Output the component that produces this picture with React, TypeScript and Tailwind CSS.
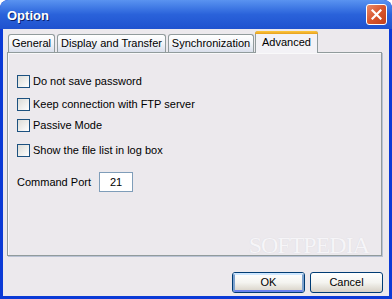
import React from "react";

const font = { fontFamily: '"Liberation Sans", Arial, sans-serif' };

function Check({ label }: { label: string }) {
  return (
    <div className="flex items-center h-[13px]">
      <div className="w-[13px] h-[13px] border border-[#1c5180] bg-gradient-to-br from-[#dcdcd7] to-[#ffffff]" />
      <span className="ml-[3px] text-[11px] leading-none text-black">{label}</span>
    </div>
  );
}

function Tab({ label, w, selected }: { label: string; w: string; selected?: boolean }) {
  if (selected) {
    return (
      <div className={`${w} h-[22px] relative z-10 -mb-px -ml-[1px] border border-b-0 border-[#919b9c] rounded-t-[3px] bg-[#f3f2f6] flex flex-col`}>
        <div className="h-[3px] -mx-px -mt-px rounded-t-[3px] bg-gradient-to-b from-[#ffc83c] to-[#e6a01e]" />
        <div className="flex-1 flex items-center justify-center text-[11px] leading-none text-black pb-[3px]">{label}</div>
      </div>
    );
  }
  return (
    <div className={`${w} h-[18px] border border-b-0 border-[#919b9c] rounded-t-[3px] bg-gradient-to-b from-[#ffffff] via-[#f2f4f8] to-[#d9dfeb] flex items-center justify-center text-[11px] leading-none text-black`}>
      {label}
    </div>
  );
}

function Btn({ label, def }: { label: string; def?: boolean }) {
  return (
    <div className="w-[73px] h-[21px] rounded-[3px] border border-[#003c74] bg-gradient-to-b from-[#ffffff] via-[#f4f4f0] to-[#d6d0c5] flex items-center justify-center relative">
      {def && <div className="absolute inset-0 rounded-[2px] border-[2px] border-[#7da2ce] border-t-[#cee7ff] border-b-[#6982ee]" />}
      <span className="relative text-[11px] leading-none text-black">{label}</span>
    </div>
  );
}

export default function App() {
  return (
    <div style={font} className="w-[392px] h-[299px] bg-[#0b3ad6] rounded-t-[8px] flex flex-col overflow-hidden select-none">
      {/* Title bar */}
      <div className="h-[29px] shrink-0 rounded-t-[8px] bg-gradient-to-b from-[#5a93f0] via-[#2a62da] to-[#1f52cf] flex items-center justify-between pl-[7px] pr-[5px]">
        <span className="text-white font-bold text-[13px] leading-none pt-[2px] [text-shadow:1px_1px_0_#0a1f6a]">
          Option
        </span>
        <div className="w-[21px] h-[21px] rounded-[3px] border border-white bg-gradient-to-br from-[#e98a6a] via-[#d8552c] to-[#c2401a] flex items-center justify-center">
          <svg width="11" height="11" viewBox="0 0 11 11">
            <path d="M1.5 1.5 L9.5 9.5 M9.5 1.5 L1.5 9.5" stroke="white" strokeWidth="2.2" strokeLinecap="square" />
          </svg>
        </div>
      </div>

      {/* Body */}
      <div className="flex-1 mx-[3px] mb-[3px] bg-[#ece9ed] flex flex-col pl-[4px] pt-[3px] relative">
        {/* Tabs */}
        <div className="flex items-end h-[20px] pl-[1px] gap-[2px]">
          <Tab label="General" w="w-[47px]" />
          <Tab label="Display and Transfer" w="w-[109px]" />
          <Tab label="Synchronization" w="w-[86px]" />
          <Tab label="Advanced" w="w-[63px]" selected />
        </div>
        {/* Panel */}
        <div className="w-[375px] h-[204px] border border-[#919b9c] shadow-[1px_1px_0_#b9c2d4] bg-[#ece9ed] relative">
          <div className="absolute inset-0 border-l border-t border-white/70 pointer-events-none" />
          <div className="pl-[9px] pt-[22px] flex flex-col">
            <Check label="Do not save password" />
            <div className="h-[10px]" />
            <Check label="Keep connection with FTP server" />
            <div className="h-[8px]" />
            <Check label="Passive Mode" />
            <div className="h-[12px]" />
            <Check label="Show the file list in log box" />
            <div className="mt-[15px] flex items-center">
              <span className="text-[11px] leading-none text-black w-[82px]">Command Port</span>
              <div className="w-[34px] h-[20px] border border-[#7f9db9] bg-white flex items-center justify-center text-[11px] leading-none text-black">
                21
              </div>
            </div>
          </div>
          <div
            className="absolute right-[12px] bottom-[-2px] text-[24px] leading-none tracking-[-1px] text-[#f6f5f8] [text-shadow:0_0_1px_#d6d4da]"
            style={{ fontFamily: '"Liberation Serif", serif' }}
          >
            SOFTPEDIA
          </div>
        </div>
        {/* Buttons */}
        <div className="mt-[16px] flex justify-end gap-[5px] pr-[6px]">
          <Btn label="OK" def />
          <Btn label="Cancel" />
        </div>
      </div>
    </div>
  );
}
